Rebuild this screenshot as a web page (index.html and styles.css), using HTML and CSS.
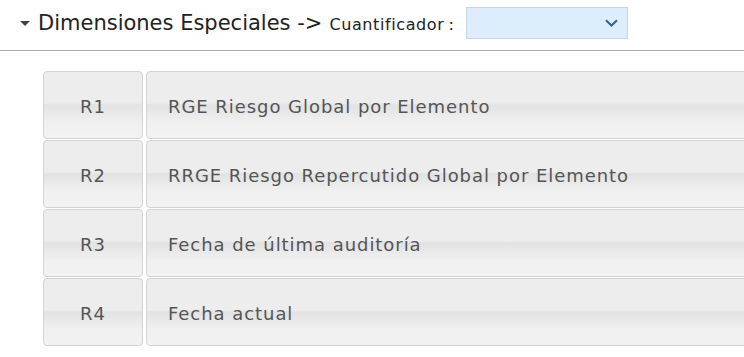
FILE: index.html
```html
<!DOCTYPE html>
<html lang="es">
<head>
<meta charset="utf-8">
<link rel="stylesheet" href="styles.css">
</head>
<body>
<div class="header">
  <span class="caret"></span>
  <span class="title">Dimensiones Especiales -&gt;</span>
  <span class="label">Cuantificador<span class="colon">:</span></span>
  <div class="select"><svg width="13" height="8" viewBox="0 0 13 8"><path d="M1 1.2 L6.5 6.5 L12 1.2" fill="none" stroke="#35628f" stroke-width="2"/></svg></div>
</div>
<div class="rows">
  <div class="row"><div class="cell code">R1</div><div class="cell desc">RGE Riesgo Global por Elemento</div></div>
  <div class="row"><div class="cell code">R2</div><div class="cell desc">RRGE Riesgo Repercutido Global por Elemento</div></div>
  <div class="row"><div class="cell code">R3</div><div class="cell desc">Fecha de última auditoría</div></div>
  <div class="row"><div class="cell code">R4</div><div class="cell desc">Fecha actual</div></div>
</div>
</body>
</html>
```
FILE: styles.css
```css
html, body { margin: 0; padding: 0; background: #fff; }
body { font-family: "DejaVu Sans", Verdana, sans-serif; overflow: hidden; }
.header {
  display: flex; align-items: center;
  height: 51px; box-sizing: border-box;
  padding: 0 0 4px 20px;
  border-bottom: 1px solid #aaa;
}
.caret {
  width: 0; height: 0;
  border-left: 5px solid transparent; border-right: 5px solid transparent;
  border-top: 5px solid #444;
  margin-right: 8px; margin-top: 1px;
}
.title { font-size: 21px; color: #222; margin-right: 7px; }
.label { font-size: 16px; letter-spacing: 0.6px; color: #222; margin-top: 3px; margin-right: 12px; }
.colon { margin-left: 4px; }
.select {
  width: 162px; height: 32px; box-sizing: border-box;
  background: #ddedfb; border: 1px solid #c3d6e6;
  display: flex; align-items: center; justify-content: flex-end;
  padding-right: 9px;
}
.rows {
  display: flex; flex-direction: column; gap: 1px;
  padding: 20px 0 0 43px;
}
.row { display: flex; gap: 3px; height: 68px; }
.cell {
  box-sizing: border-box;
  border: 1px solid #d3d3d3; border-radius: 4px;
  background: linear-gradient(#ededed 0%, #ededed 47%, #e2e2e2 50%, #f0f0f0 75%, #f2f2f2 100%);
  display: flex; align-items: center;
  font-size: 18px; letter-spacing: 0.95px; color: #555;
  padding-top: 2px;
}
.code { width: 100px; justify-content: center; flex: none; }
.desc { flex: 1; padding-left: 21px; margin-right: -10px; }
```
